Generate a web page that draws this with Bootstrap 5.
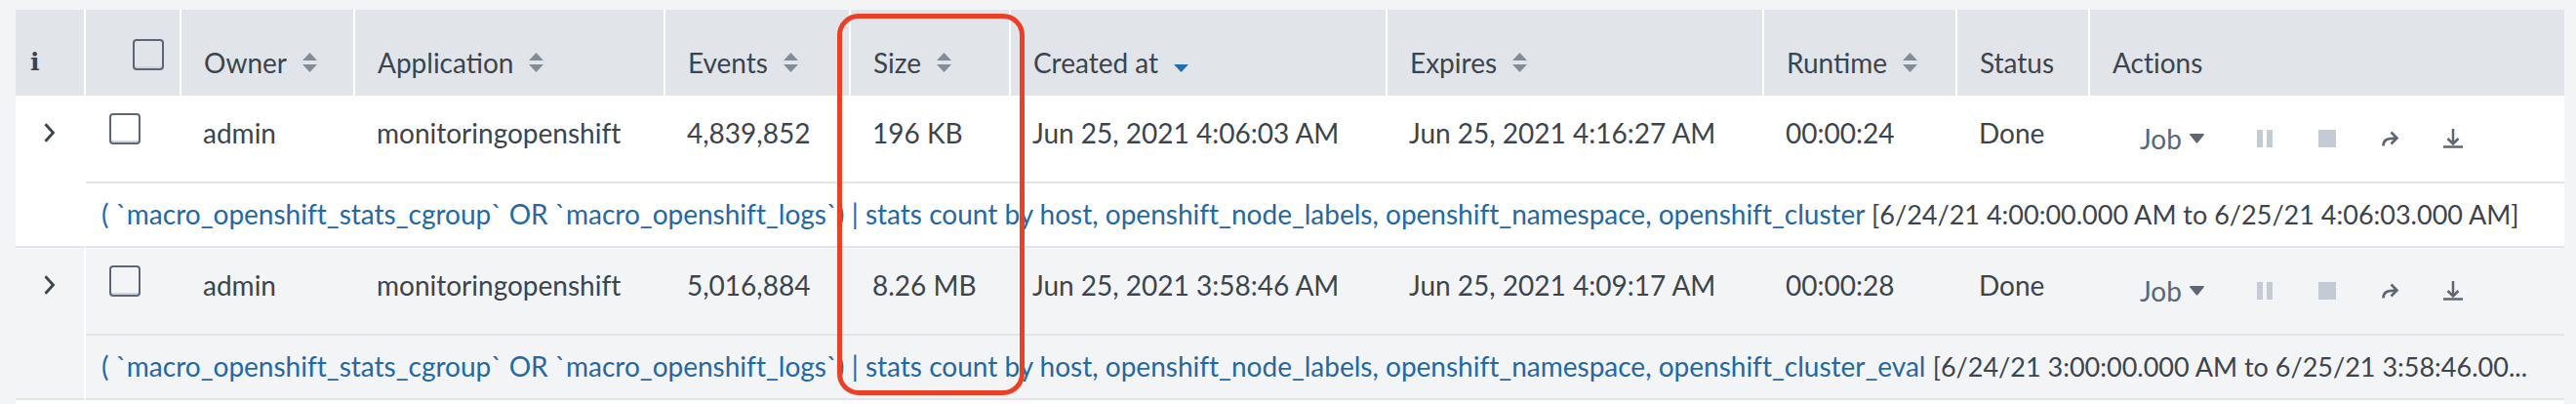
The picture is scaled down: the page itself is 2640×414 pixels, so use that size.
<!DOCTYPE html>
<html lang="en">
<head>
<meta charset="utf-8">
<meta name="viewport" content="width=device-width, initial-scale=1">
<title>Jobs</title>
<link href="https://cdn.jsdelivr.net/npm/bootstrap@5.3.0/dist/css/bootstrap.min.css" rel="stylesheet">
<script src="https://cdn.jsdelivr.net/npm/bootstrap@5.3.0/dist/js/bootstrap.bundle.min.js"></script>
<style>
  body { background: #f2f4f5; color: #3c444d; font-family: Lato, sans-serif; font-size: 28px; line-height: 40px; font-variant-ligatures: none; }
  .jobs-wrap { padding: 10px 12px 0 16px; }
  .jobs { table-layout: fixed; border-collapse: separate; border-spacing: 0; background: #fff; white-space: nowrap; }
  .jobs th, .jobs td { padding: 18px 0 0 22px; vertical-align: top; text-align: left; }
  .jobs th { height: 88px; padding: 34px 0 14px 23px; background: #e1e5ea; border-right: 2px solid #fff; font-weight: 400; }
  .jobs th:last-child { border-right: 0; }
  .jobs .info-col { padding-left: 15px; font-family: "DejaVu Serif", serif; font-weight: 700; font-size: 25px; }
  .jobs .all-col { padding: 30px 16px 0 0; text-align: right; }
  .jobs .pick-cell { padding: 18px 0 0 24px; }
  .jobs .expand-cell { padding: 20px 0 0 25px; border-right: 2px solid #fff; border-bottom: 2px solid #e1e5ea; }
  .jobs .job-row td { height: 88px; }
  .jobs .search-cell { height: 68px; padding: 11px 16px 0 16px; border-top: 2px solid #e1e5ea; border-bottom: 2px solid #e1e5ea; }
  .jobs .striped td { background: #f2f4f5; }
  .col-i { width: 72px; } .col-pick { width: 98px; } .col-owner { width: 178px; } .col-app { width: 318px; }
  .col-events { width: 190px; } .col-size { width: 164px; } .col-date { width: 386px; }
  .col-runtime { width: 198px; } .col-status { width: 136px; }
  .form-check-input.pick { width: 32px; height: 32px; margin: 0; border: 2px solid #5c6773; border-radius: 4px; background-color: transparent; box-shadow: inset 0 -2px 0 #d0d4d7; vertical-align: top; float: none; }
  .plain { padding: 0; border: 0; background: none; color: inherit; line-height: 40px; }
  .sort-mark { width: 15px; height: 20px; flex: none; fill: #818d99; }
  .sort-mark.active { fill: #1e6fb2; }
  .actions { padding-left: 29px; height: 40px; color: #5c6773; }
  .actions svg { display: block; fill: currentColor; }
  .actions .plain:disabled { color: #c3cbd4; opacity: 1; }
  .actions .menu-btn { margin-right: 54px; }
  .actions .pause-btn, .actions .stop-btn { margin-right: 47px; }
  .actions .share-btn { margin-right: 45px; }
  .jobs .job-row .actions-cell { padding-top: 24px; }
  .search-link { color: #2468a4; text-decoration: none; }
  .span-text { font-size: 27px; }
  .highlight-box { position: absolute; top: 4px; left: -14px; right: -16px; height: 391px; border: 5px solid #ea4025; border-radius: 22px; pointer-events: none; z-index: 2; }
</style>
</head>
<body>
<svg class="d-none" aria-hidden="true">
  <symbol id="sort" viewBox="0 0 15 20"><path d="M0 8 7.500 0 15 8zM0 12h15l-7.500 8z"/></symbol>
  <symbol id="sort-down" viewBox="0 0 15 20"><path d="M0 12h15l-7.500 8z"/></symbol>
  <symbol id="caret" viewBox="0 0 15 10"><path d="M1 0h13q1 0 .7 1.300L8.500 9q-1 1-2 0L.3 1.300Q0 0 1 0z"/></symbol>
  <symbol id="chevron" viewBox="0 0 12 20"><path d="M1.500 1.200 9.500 10l-8 8.800" fill="none" stroke="#3c444d" stroke-width="2.800"/></symbol>
  <symbol id="pause" viewBox="0 0 16 18"><path d="M0 0h6v18H0zM10 0h6v18h-6z"/></symbol>
  <symbol id="stop" viewBox="0 0 18 18"><path d="M0 0h18v18H0z"/></symbol>
  <symbol id="share" viewBox="0 0 18 16"><path d="M1.500 15.500C1.500 9.500 5 7.500 15.500 7.500M9.500 1.500l6 6-6 6" fill="none" stroke="currentColor" stroke-width="2.600"/></symbol>
  <symbol id="download" viewBox="0 0 20 20"><path d="M10 0v15M4.500 10 10 15.500 15.500 10M0 18.500h20" fill="none" stroke="currentColor" stroke-width="2.500"/></symbol>
</svg>
<main class="jobs-wrap">
  <table class="jobs w-100">
    <colgroup>
      <col class="col-i"><col class="col-pick"><col class="col-owner"><col class="col-app"><col class="col-events"><col class="col-size"><col class="col-date"><col class="col-date"><col class="col-runtime"><col class="col-status"><col>
    </colgroup>
    <thead>
      <tr>
        <th class="info-col" scope="col">i</th>
        <th class="all-col" scope="col"><input class="form-check-input pick" type="checkbox" aria-label="Select all jobs"></th>
        <th scope="col"><button class="plain d-flex align-items-center gap-3" type="button">Owner <svg class="sort-mark"><use href="#sort"/></svg></button></th>
        <th scope="col"><button class="plain d-flex align-items-center gap-3" type="button">Application <svg class="sort-mark"><use href="#sort"/></svg></button></th>
        <th scope="col"><button class="plain d-flex align-items-center gap-3" type="button">Events <svg class="sort-mark"><use href="#sort"/></svg></button></th>
        <th class="position-relative" scope="col"><button class="plain d-flex align-items-center gap-3" type="button">Size <svg class="sort-mark"><use href="#sort"/></svg></button><span class="highlight-box"></span></th>
        <th scope="col" aria-sort="descending"><button class="plain d-flex align-items-center gap-3" type="button">Created at <svg class="sort-mark active"><use href="#sort-down"/></svg></button></th>
        <th scope="col"><button class="plain d-flex align-items-center gap-3" type="button">Expires <svg class="sort-mark"><use href="#sort"/></svg></button></th>
        <th scope="col"><button class="plain d-flex align-items-center gap-3" type="button">Runtime <svg class="sort-mark"><use href="#sort"/></svg></button></th>
        <th scope="col">Status</th>
        <th scope="col">Actions</th>
      </tr>
    </thead>
    <tbody>
      <tr class="job-row">
        <td class="expand-cell" rowspan="2"><button class="plain d-flex" type="button" aria-label="Expand job"><svg class="mx-1 my-2" width="12" height="20"><use href="#chevron"/></svg></button></td>
        <td class="pick-cell"><input class="form-check-input pick" type="checkbox" aria-label="Select job"></td>
        <td>admin</td>
        <td>monitoringopenshift</td>
        <td>4,839,852</td>
        <td>196 KB</td>
        <td>Jun 25, 2021 4:06:03 AM</td>
        <td>Jun 25, 2021 4:16:27 AM</td>
        <td>00:00:24</td>
        <td>Done</td>
        <td class="actions-cell">
          <div class="actions d-flex align-items-center">
            <button class="plain menu-btn d-flex align-items-center gap-2" type="button">Job <svg width="15" height="10"><use href="#caret"/></svg></button>
            <button class="plain pause-btn" type="button" disabled aria-label="Pause"><svg width="16" height="18"><use href="#pause"/></svg></button>
            <button class="plain stop-btn" type="button" disabled aria-label="Stop"><svg width="18" height="18"><use href="#stop"/></svg></button>
            <button class="plain share-btn" type="button" aria-label="Share"><svg width="18" height="16"><use href="#share"/></svg></button>
            <button class="plain" type="button" aria-label="Export"><svg width="20" height="20"><use href="#download"/></svg></button>
          </div>
        </td>
      </tr>
      <tr>
        <td class="search-cell" colspan="10"><div class="text-truncate"><a class="search-link" href="#">( `macro_openshift_stats_cgroup` OR `macro_openshift_logs`) | stats count by host, openshift_node_labels, openshift_namespace, openshift_cluster</a> <span class="span-text">[6/24/21 4:00:00.000 AM to 6/25/21 4:06:03.000 AM]</span></div></td>
      </tr>
      <tr class="job-row striped">
        <td class="expand-cell" rowspan="2"><button class="plain d-flex" type="button" aria-label="Expand job"><svg class="mx-1 my-2" width="12" height="20"><use href="#chevron"/></svg></button></td>
        <td class="pick-cell"><input class="form-check-input pick" type="checkbox" aria-label="Select job"></td>
        <td>admin</td>
        <td>monitoringopenshift</td>
        <td>5,016,884</td>
        <td>8.26 MB</td>
        <td>Jun 25, 2021 3:58:46 AM</td>
        <td>Jun 25, 2021 4:09:17 AM</td>
        <td>00:00:28</td>
        <td>Done</td>
        <td class="actions-cell">
          <div class="actions d-flex align-items-center">
            <button class="plain menu-btn d-flex align-items-center gap-2" type="button">Job <svg width="15" height="10"><use href="#caret"/></svg></button>
            <button class="plain pause-btn" type="button" disabled aria-label="Pause"><svg width="16" height="18"><use href="#pause"/></svg></button>
            <button class="plain stop-btn" type="button" disabled aria-label="Stop"><svg width="18" height="18"><use href="#stop"/></svg></button>
            <button class="plain share-btn" type="button" aria-label="Share"><svg width="18" height="16"><use href="#share"/></svg></button>
            <button class="plain" type="button" aria-label="Export"><svg width="20" height="20"><use href="#download"/></svg></button>
          </div>
        </td>
      </tr>
      <tr class="striped">
        <td class="search-cell" colspan="10"><div class="text-truncate"><a class="search-link" href="#">( `macro_openshift_stats_cgroup` OR `macro_openshift_logs`) | stats count by host, openshift_node_labels, openshift_namespace, openshift_cluster_eval</a> <span class="span-text">[6/24/21 3:00:00.000 AM to 6/25/21 3:58:46.00...</span></div></td>
      </tr>
    </tbody>
  </table>
  <div class="bg-white pt-4"></div>
</main>
</body>
</html>
